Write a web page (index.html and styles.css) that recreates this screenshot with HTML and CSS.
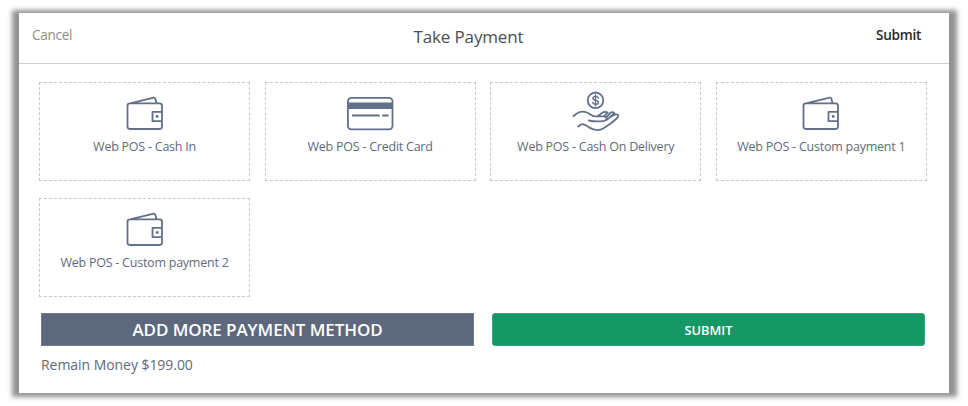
FILE: index.html
```html
<!DOCTYPE html>
<html lang="en">
<head>
<meta charset="utf-8">
<title>Take Payment</title>
<link rel="stylesheet" href="styles.css">
</head>
<body>
<svg class="defs" width="0" height="0" aria-hidden="true">
  <symbol id="wallet" viewBox="0 0 38 36">
    <path d="M3.8 7.4H33.6Q36 7.4 36 9.8V30.6Q36 33 33.6 33H3.8Q1.5 33 1.5 30.6V9.8Q1.5 7.4 3.8 7.4ZM4 7.4L27.7 1.6Q29 1.4 29.3 2.6L30.7 7.4M36 15.8H26.5V25.2H36"/>
    <circle class="dot" cx="31.2" cy="20.5" r="1.4"/>
  </symbol>
</svg>
<main class="panel">
  <header class="header">
    <a class="cancel">Cancel</a>
    <h1 class="title">Take Payment</h1>
    <a class="confirm">Submit</a>
  </header>
  <section class="methods">
    <div class="method">
      <svg class="icon" width="38" height="36"><use href="#wallet"/></svg>
      <span class="label">Web POS - Cash In</span>
    </div>
    <div class="method">
      <svg class="icon" width="48" height="36" viewBox="0 0 48 36">
        <rect x="1.9" y="1.9" width="44.6" height="31.4" rx="3.5"/>
        <path class="band" d="M2 6.6H46V13H2Z"/>
        <path class="stripe" d="M6 19.5H33.7M36.3 19.5H42.5"/>
      </svg>
      <span class="label">Web POS - Credit Card</span>
    </div>
    <div class="method">
      <svg class="icon tall" width="48" height="42" viewBox="0 0 48 42">
        <circle cx="23.5" cy="10.3" r="7.8"/>
        <path class="coin" d="M26.2 8.2Q25.8 6.4 23.5 6.4Q20.9 6.4 20.9 8.3Q20.9 9.8 23.5 10.3Q26.3 10.8 26.3 12.4Q26.3 14.3 23.5 14.3Q21 14.3 20.7 12.4M23.5 4.7V15.9"/>
        <path d="M1.5 26.2C5 22.7 9 21.1 13 21.9C18 22.7 19 26.2 23 26.4H31.5Q34.7 26.6 34.5 29Q34.3 30.8 31.2 31.1Q23.5 31.9 16.8 30.5M25.7 26.2L30.4 22.6Q33.3 21.2 35.7 22.6L31.8 26.3M34.4 27.3L38.7 22.6Q41.3 21.4 42.4 23.3L35.2 29.6M38.9 26.7L43.3 24.4Q46.7 23.9 46 26.9C42 32 36 35.2 31.5 38.3C26 41.8 21 39.7 17 37.4C14 35.6 12 33.4 9.5 34.3L6.2 36.6"/>
      </svg>
      <span class="label">Web POS - Cash On Delivery</span>
    </div>
    <div class="method">
      <svg class="icon" width="38" height="36"><use href="#wallet"/></svg>
      <span class="label">Web POS - Custom payment 1</span>
    </div>
    <div class="method">
      <svg class="icon" width="38" height="36"><use href="#wallet"/></svg>
      <span class="label">Web POS - Custom payment 2</span>
    </div>
  </section>
  <div class="actions">
    <button class="button add">ADD MORE PAYMENT METHOD</button>
    <button class="button submit">SUBMIT</button>
  </div>
  <p class="remain">Remain Money $199.00</p>
</main>
</body>
</html>
```
FILE: styles.css
```css
* { box-sizing: border-box; }
body {
  margin: 0;
  padding: 13px 19px;
  background: #fff;
  color: #5e6a7d;
  font-family: "Open Sans", sans-serif;
}
.defs { display: block; }
.panel {
  position: relative;
  width: 930px;
  height: 380px;
  background: #fff;
}
.panel::before {
  content: "";
  position: absolute;
  inset: -3px -8px -4px -7px;
  z-index: -1;
  background: #929292;
  filter: blur(2.9px);
}
.header {
  display: grid;
  grid-template-columns: 1fr auto 1fr;
  height: 51px;
  padding: 0 28px 0 13px;
  border-bottom: 1px solid #cfcfcf;
}
.cancel, .confirm {
  padding-top: 12px;
  font-size: 13.6px;
  line-height: 20px;
  letter-spacing: -0.3px;
}
.cancel { color: #8f8f86; }
.confirm { color: #26282d; font-weight: 600; text-align: right; }
.title {
  margin: 0;
  padding-top: 12px;
  color: #4a4d52;
  font-size: 17px;
  font-weight: 400;
  line-height: 24px;
  letter-spacing: -0.15px;
  transform: translateX(-8px);
}
.methods {
  display: grid;
  grid-template-columns: repeat(4, 211px);
  grid-auto-rows: 99px;
  gap: 17px 14.6px;
  padding: 18px 20px 0;
}
.method {
  display: flex;
  flex-direction: column;
  align-items: center;
  padding-top: 13px;
  border: 1px dashed #c8c8c8;
}
.icon {
  display: block;
  fill: none;
  stroke: #63708a;
  stroke-width: 1.8;
  stroke-linecap: round;
  stroke-linejoin: round;
}
.icon.tall { margin-top: -6px; }
.dot, .band { fill: #63708a; stroke: none; }
.stripe { stroke-linecap: butt; }
.coin { stroke-width: 1.4; }
.label {
  margin-top: 6px;
  font-size: 12.5px;
  line-height: 18px;
  letter-spacing: -0.24px;
  white-space: nowrap;
}
.actions { display: flex; gap: 18px; padding: 16px 22px 0; }
.button {
  width: 433px;
  height: 33px;
  padding: 0;
  border: 1px solid #727d90;
  color: #fff;
  font-family: inherit;
  font-weight: 600;
}
.add { background: #5d687c; font-size: 17px; letter-spacing: -0.08px; }
.submit {
  background: #169866;
  border-color: #37a67b;
  border-radius: 3px;
  font-size: 12.8px;
}
.remain {
  margin: 9px 22px 0;
  font-size: 14px;
  line-height: 20px;
  letter-spacing: -0.05px;
}
```
